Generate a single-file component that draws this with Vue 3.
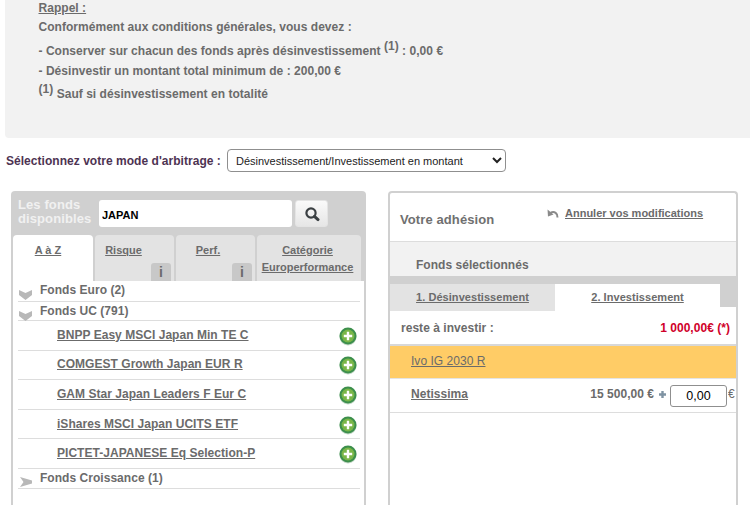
<script setup>
const tabs = [
  { label: 'A à Z', cls: 'active' },
  { label: 'Risque', cls: 'risk', info: true },
  { label: 'Perf.', cls: 'perf', info: true },
  { label: 'Catégorie Europerformance', cls: 'wide' }
]
const funds = [
  'BNPP Easy MSCI Japan Min TE C',
  'COMGEST Growth Japan EUR R',
  'GAM Star Japan Leaders F Eur C',
  'iShares MSCI Japan UCITS ETF',
  'PICTET-JAPANESE Eq Selection-P'
]
</script>

<template>
  <div class="page">
    <section class="notice">
      <p class="l1"><u>Rappel :</u></p>
      <p class="l2">Conformément aux conditions générales, vous devez :</p>
      <p class="l3">- Conserver sur chacun des fonds après désinvestissement <sup>(1)</sup> : 0,00 €</p>
      <p class="l4">- Désinvestir un montant total minimum de : 200,00 €</p>
      <p class="l5"><sup>(1)</sup> Sauf si désinvestissement en totalité</p>
    </section>

    <div class="mode">
      <label class="mode-label">Sélectionnez votre mode d'arbitrage :</label>
      <select class="mode-select">
        <option>Désinvestissement/Investissement en montant</option>
      </select>
    </div>

    <div class="columns">
      <section class="left">
        <div class="search">
          <div class="search-title">Les fonds disponibles</div>
          <input class="search-input" value="JAPAN" />
          <button class="search-btn" aria-label="Rechercher">
            <svg width="16" height="16" viewBox="0 0 16 16">
              <circle cx="7" cy="7" r="4.600" fill="none" stroke="#3a3f42" stroke-width="2.200" />
              <path d="M10.400 10.400 14 13.600" stroke="#3a3f42" stroke-width="3" stroke-linecap="round" />
            </svg>
          </button>
        </div>
        <div class="tabs">
          <div v-for="t in tabs" :key="t.label" class="tab" :class="t.cls">
            <u>{{ t.label }}</u>
            <span v-if="t.info" class="info">i</span>
          </div>
        </div>
        <div class="list">
          <div class="group g-euro">
            <svg class="chev" width="13" height="10" viewBox="0 0 13 10"><path d="M0 0 6.500 3 13 0V5L6.500 10 0 5Z" fill="#b8b8b8" /></svg>
            Fonds Euro (2)
          </div>
          <div class="group g-uc">
            <svg class="chev" width="13" height="10" viewBox="0 0 13 10"><path d="M0 0 6.500 3 13 0V5L6.500 10 0 5Z" fill="#b8b8b8" /></svg>
            Fonds UC (791)
          </div>
          <div v-for="f in funds" :key="f" class="fund">
            <u>{{ f }}</u>
            <svg class="plus" width="18" height="19" viewBox="0 0 18 19">
              <circle cx="9" cy="10" r="8.500" fill="#c3d6c6" />
              <circle cx="9" cy="9" r="8.500" fill="#3c8f4c" />
              <circle cx="9" cy="9" r="6.500" fill="#7ab648" />
              <path d="M9 4.800v8.400M4.800 9h8.400" stroke="#fff" stroke-width="2.400" />
            </svg>
          </div>
          <div class="group g-cro">
            <svg class="chev side" width="12" height="10" viewBox="0 0 12 10"><path d="M0 0 12 3.500V6.500L0 10 3.500 5Z" fill="#b8b8b8" /></svg>
            Fonds Croissance (1)
          </div>
        </div>
      </section>

      <section class="right">
        <header class="adh">
          <h2>Votre adhésion</h2>
          <div class="undo">
            <svg width="12" height="10" viewBox="0 0 12 10">
              <path d="M10.500 9.500C10.800 5.500 7.500 2.800 3.500 4.800" fill="none" stroke="#8a8a8a" stroke-width="2" />
              <path d="M.5 1.500 1 8.500 6.500 6.500Z" fill="#8a8a8a" />
            </svg>
            <u>Annuler vos modifications</u>
          </div>
        </header>
        <div class="selected">Fonds sélectionnés</div>
        <div class="rtabs">
          <div class="rtab"><u>1. Désinvestissement</u></div>
          <div class="rtab on"><u>2. Investissement</u></div>
        </div>
        <div class="rest">
          <span>reste à investir :</span>
          <span class="red">1 000,00€ (*)</span>
        </div>
        <div class="ivo"><u>Ivo IG 2030 R</u></div>
        <div class="net">
          <u class="net-name">Netissima</u>
          <span class="net-amt">15 500,00 €</span>
          <svg class="net-plus" width="7" height="7" viewBox="0 0 7 7"><path d="M3.500 0v7M0 3.500h7" stroke="#7f93a3" stroke-width="2.400" /></svg>
          <input class="net-input" value="0,00" />
          <span class="net-eur">€</span>
        </div>
      </section>
    </div>
  </div>
</template>

<style scoped>
.page {
  width: 750px;
  height: 505px;
  overflow: hidden;
  background: #fff;
  font: bold 12px "Liberation Sans", Arial, sans-serif;
  letter-spacing: .035px;
  color: #6b6b6b;
}
p { margin: 0; white-space: nowrap; }
sup { font-size: 12px; line-height: 0; vertical-align: 5px; }
.notice {
  margin-left: 5px;
  height: 138px;
  box-sizing: border-box;
  padding-left: 33.500px;
  background: #f2f2f2;
  border-bottom-left-radius: 4px;
}
.l1 { line-height: 16px; }
.l2 { line-height: 22px; }
.l3 { line-height: 26px; }
.l4 { line-height: 14px; }
.l5 { line-height: 30px; padding-top: 1px; }

.mode {
  display: flex;
  align-items: center;
  height: 23px;
  margin-top: 11px;
  padding-left: 6px;
}
.mode-label { width: 221px; color: #4d3352; white-space: nowrap; }
.mode-select {
  width: 279px;
  height: 23px;
  box-sizing: border-box;
  padding: 0 4px;
  background: #fff;
  border: 1px solid #8f8f8f;
  border-radius: 4px;
  font: 11px "Liberation Sans", Arial, sans-serif;
  color: #222;
}

.columns {
  display: flex;
  align-items: flex-start;
  margin-top: 19px;
  padding-left: 11px;
}
.left {
  width: 355px;
  height: 360px;
  box-sizing: border-box;
  background: #d0d0d0;
  border-radius: 4px 4px 0 0;
  padding: 0 2px;
  flex: none;
}
.search {
  display: flex;
  align-items: flex-start;
  height: 44px;
  padding: 9px 0 0 5px;
  box-sizing: border-box;
}
.search-title {
  width: 81px;
  flex: none;
  margin-top: -2px;
  color: #f1f1f1;
  font-size: 13px;
  letter-spacing: .1px;
  line-height: 14px;
}
.search-input {
  width: 193px;
  height: 27px;
  box-sizing: border-box;
  border: 0;
  border-radius: 3px;
  padding: 2px 3px 0;
  background: #fff;
  font: bold 11px "Liberation Sans", Arial, sans-serif;
  color: #000;
  outline: none;
}
.search-btn {
  width: 33px;
  height: 27px;
  margin-left: 3px;
  padding: 0;
  border: 1px solid #e4e4e4;
  border-radius: 3px;
  background: linear-gradient(#fafafa, #e6e6e6);
  display: flex;
  align-items: center;
  justify-content: center;
}
.tabs { display: flex; gap: 2px; height: 46px; }
.tab {
  position: relative;
  width: 79px;
  box-sizing: border-box;
  padding-top: 7px;
  background: #e3e3e3;
  border-radius: 4px 4px 0 0;
  text-align: center;
  font-size: 11px;
  line-height: 16px;
  letter-spacing: 0;
}
.tab.active { width: 80px; background: #fff; padding-right: 10px; }
.tab.risk { padding-right: 22px; }
.tab.perf { padding-right: 15px; }
.tab.wide { width: 104px; line-height: 17px; padding-right: 3px; }
.info {
  position: absolute;
  right: 3px;
  bottom: 0;
  width: 20px;
  height: 18px;
  background: #c8c8c8;
  border-radius: 3px 3px 0 0;
  color: #6b6b6b;
  font-size: 14px;
  font-weight: bold;
  line-height: 19px;
}
.list {
  height: 300px;
  background: #fff;
  padding: 0 4px 0 5px;
  box-sizing: border-box;
}
.group {
  position: relative;
  padding-left: 22px;
  border-bottom: 1px solid #ddd;
}
.g-euro { height: 20px; line-height: 18px; }
.g-uc { height: 18px; line-height: 18px; }
.g-cro { height: 19px; line-height: 19px; }
.chev { position: absolute; left: 1px; top: 9px; }
.side { left: 2px; top: 8px; }
.fund {
  display: flex;
  align-items: center;
  justify-content: space-between;
  height: 29.600px;
  box-sizing: border-box;
  padding: 0 3px 0 39px;
  border-bottom: 1px solid #ddd;
}
.fund u { margin-top: -1px; }
.plus { flex: none; margin-top: 2px; }

.right {
  width: 350px;
  height: 340px;
  margin-left: 22px;
  box-sizing: border-box;
  flex: none;
  background: #fff;
  border: 2px solid #d0d0d0;
  border-bottom: 0;
  border-radius: 4px 4px 0 0;
}
.adh {
  position: relative;
  height: 49px;
  box-sizing: border-box;
  border-bottom: 1px solid #ddd;
}
.adh h2 {
  margin: 0;
  padding: 18px 0 0 10px;
  font-size: 13px;
  letter-spacing: .1px;
  line-height: 17px;
  color: #707070;
}
.undo {
  position: absolute;
  left: 157px;
  top: 13px;
  display: flex;
  align-items: center;
  gap: 6px;
  font-size: 11px;
  letter-spacing: 0;
  line-height: 14px;
}
.selected {
  height: 34px;
  box-sizing: border-box;
  padding: 15px 0 0 26px;
  background: #f2f2f2;
  line-height: 16px;
}
.rtabs {
  display: flex;
  height: 31px;
  padding-top: 8px;
  box-sizing: border-box;
  background: linear-gradient(#d0d0d0 31px, #fff 31px);
}
.rtab {
  width: 165px;
  height: 27px;
  box-sizing: border-box;
  background: #e3e3e3;
  text-align: center;
  font-size: 11px;
  letter-spacing: .05px;
  line-height: 27px;
}
.rtab.on { background: #fff; height: 31px; }
.rest {
  display: flex;
  justify-content: space-between;
  height: 39px;
  box-sizing: border-box;
  padding: 13px 6px 0 11px;
  line-height: 16px;
  border-bottom: 2px solid #d8d8d8;
}
.red { color: #d0002a; }
.ivo {
  height: 33px;
  box-sizing: border-box;
  padding: 7px 0 0 21px;
  background: #ffcc66;
  border-bottom: 1px solid #e4e4e4;
  font-weight: normal;
  line-height: 16px;
}
.net {
  display: flex;
  align-items: center;
  height: 34px;
  box-sizing: border-box;
  padding: 0 0 0 21px;
  border-bottom: 1px solid #ddd;
}
.net-name { flex: 1; margin-top: -3px; }
.net-amt { margin-top: -3px; }
.net-plus { flex: none; margin: -2px 4px 0 5px; }
.net-input {
  width: 57px;
  height: 22px;
  box-sizing: border-box;
  border: 1px solid #8f8f8f;
  border-radius: 3px;
  padding: 0;
  text-align: center;
  font: 12.500px "Liberation Sans", Arial, sans-serif;
  color: #000;
  outline: none;
}
.net-eur { width: 8px; margin-left: 1px; margin-top: -3px; font-weight: normal; overflow: hidden; }
</style>

<style>
html, body { margin: 0; overflow: hidden; background: #fff; }
</style>
